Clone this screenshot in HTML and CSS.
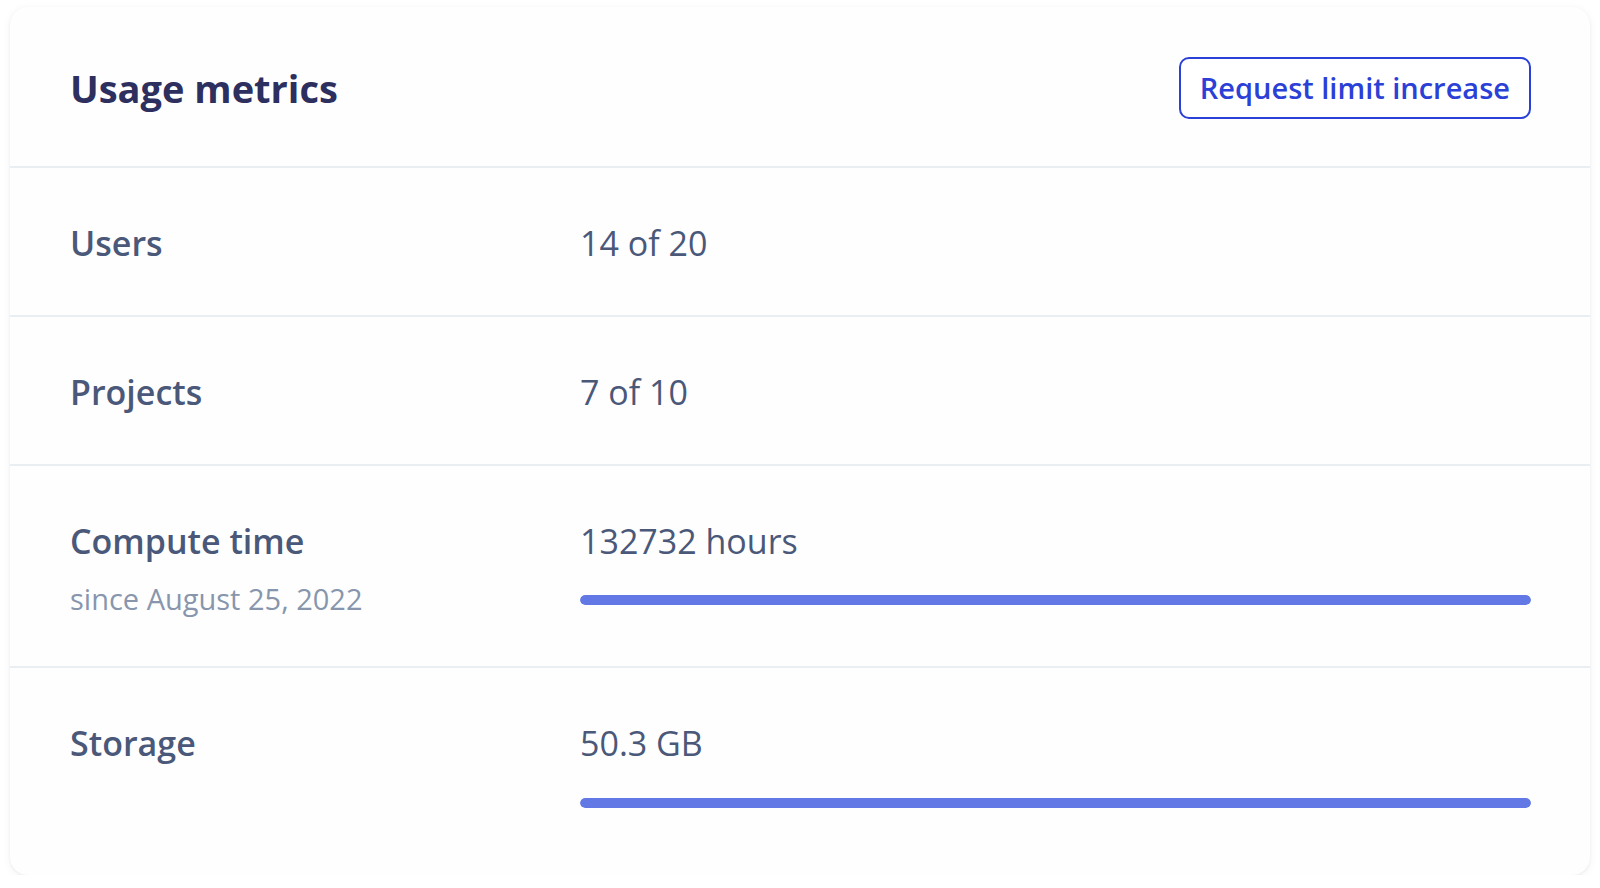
FILE: index.html
```html
<!DOCTYPE html>
<html lang="en">
<head>
<meta charset="utf-8">
<title>Usage metrics</title>
<link rel="stylesheet" href="styles.css">
</head>
<body>
<section class="card">
  <header class="card-header">
    <h2 class="card-title">Usage metrics</h2>
    <button class="btn-outline" type="button">Request limit increase</button>
  </header>
  <dl class="metrics">
    <div class="metric">
      <dt class="metric-label">Users</dt>
      <dd class="metric-value"><span class="value-text">14 of 20</span></dd>
    </div>
    <div class="metric">
      <dt class="metric-label">Projects</dt>
      <dd class="metric-value"><span class="value-text">7 of 10</span></dd>
    </div>
    <div class="metric">
      <dt class="metric-label">Compute time<span class="metric-sub">since August 25, 2022</span></dt>
      <dd class="metric-value"><span class="value-text">132732 hours</span><span class="bar"><span class="bar-fill" style="width:100%"></span></span></dd>
    </div>
    <div class="metric metric-last">
      <dt class="metric-label">Storage</dt>
      <dd class="metric-value"><span class="value-text">50.3 GB</span><span class="bar bar-last"><span class="bar-fill" style="width:100%"></span></span></dd>
    </div>
  </dl>
</section>
</body>
</html>
```

FILE: styles.css
```css
* { box-sizing: border-box; }

html, body {
  margin: 0;
  padding: 0;
  background: #ffffff;
}

body {
  font-family: "Open Sans", "Noto Sans", "Liberation Sans", sans-serif;
  padding: 7px 10px 0 10px;
}

.card {
  background: #fefefe;
  border-radius: 18px;
  box-shadow: 0 1px 3px rgba(20, 30, 60, 0.06), 0 2px 10px rgba(20, 30, 60, 0.05);
  height: 868px;
}

.card-header {
  display: flex;
  align-items: center;
  justify-content: space-between;
  padding: 50px 59px 47px 60px;
  border-bottom: 2px solid #e9eef3;
}

.card-title {
  margin: 0;
  font-size: 38px;
  line-height: 48px;
  font-weight: 700;
  color: #2d2f5e;
}

.btn-outline {
  font-family: inherit;
  font-size: 29px;
  font-weight: 600;
  line-height: 42px;
  color: #2b40d6;
  background: #ffffff;
  border: 2px solid #2b40d6;
  border-radius: 10px;
  padding: 8px 19px 8px 19px;
  cursor: pointer;
}

.metrics {
  margin: 0;
}

.metric {
  display: grid;
  grid-template-columns: 510px 1fr;
  padding: 51px 59px 48px 60px;
  border-bottom: 2px solid #e9eef3;
}

.metric-last {
  border-bottom: none;
  padding-bottom: 66px;
}

.metric-label {
  display: flex;
  flex-direction: column;
  font-size: 34px;
  line-height: 48px;
  font-weight: 600;
  color: #4a5879;
}

.metric-sub {
  margin-top: 14px;
  font-size: 29px;
  line-height: 39px;
  font-weight: 400;
  color: #8796ad;
}

.metric-value {
  margin: 0;
  display: flex;
  flex-direction: column;
  font-size: 34px;
  line-height: 48px;
  font-weight: 400;
  color: #4a5879;
}

.bar {
  display: block;
  margin-top: 30px;
  height: 10px;
  border-radius: 5px;
  background: #e6eaf7;
  overflow: hidden;
}

.bar-last {
  margin-top: 31px;
}

.bar-fill {
  display: block;
  height: 100%;
  border-radius: 5px;
  background: #6279e5;
}
```
